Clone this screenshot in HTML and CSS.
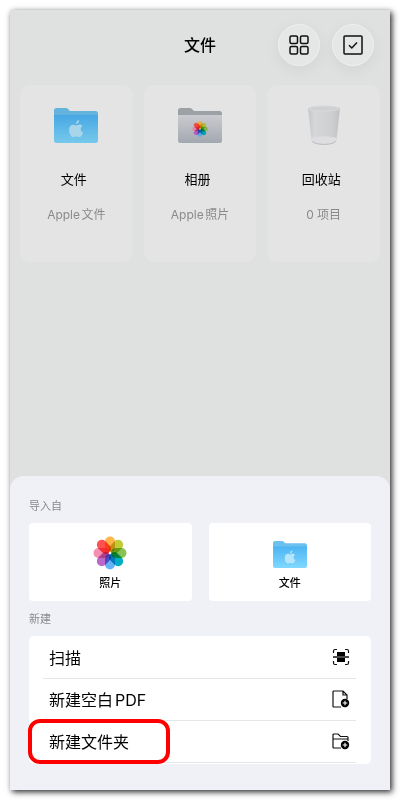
FILE: index.html
```html
<!DOCTYPE html>
<html lang="zh-CN">
  <head>
    <meta charset="UTF-8" />
    <meta name="viewport" content="width=device-width, initial-scale=1.0" />
    <title>文件</title>
    <link rel="stylesheet" href="styles.css">
  </head>
  <body>
    <!-- shared icon shapes -->
    <svg class="sprite" aria-hidden="true">
      <defs>
        <linearGradient id="blueFolder" x1="0" y1="0" x2="0" y2="1">
          <stop offset="0" stop-color="#4cb4f4" />
          <stop offset="1" stop-color="#80d8fd" />
        </linearGradient>
        <linearGradient id="grayFolder" x1="0" y1="0" x2="0" y2="1">
          <stop offset="0" stop-color="#d9dade" />
          <stop offset="1" stop-color="#afb5bd" />
        </linearGradient>
        <linearGradient id="binSide" x1="0" y1="0" x2="1" y2="0">
          <stop offset="0" stop-color="#c4c5c7" />
          <stop offset="0.2" stop-color="#d6d7d8" />
          <stop offset="0.75" stop-color="#cdced0" />
          <stop offset="1" stop-color="#c0c1c4" />
        </linearGradient>
      </defs>
      <symbol id="apple" viewBox="0 0 14 17">
        <path d="M9.8 0C10 2 8.500 4 6.700 4C6.500 2.200 8 .4 9.800 0ZM7 5.300C7.900 5.300 8.800 4.400 10.300 4.400C11.500 4.400 12.500 5 13.100 5.900C10.500 7.500 10.900 11.200 13.600 12.300C13 14.100 11.700 16.600 10.100 16.700C9 16.700 8.600 16 7.200 16C5.800 16 5.400 16.700 4.300 16.700C2.200 16.800 0 12.800 0 9.600C0 6.300 2 4.500 4.200 4.500C5.500 4.500 6.300 5.300 7 5.300Z" />
      </symbol>
      <symbol id="folder" viewBox="0 0 44 35">
        <path d="M2.500 0H11.500C13 0 13.600 .5 14.500 1.500C15.300 2.500 16 3 17.500 3H41.500Q44 3 44 5.500V12H0V2.500Q0 0 2.500 0Z" fill="#6cc0ee" />
        <path d="M0 7H44V32.500Q44 35 41.500 35H2.500Q0 35 0 32.500Z" fill="url(#blueFolder)" />
        <use href="#apple" x="15" y="12" width="14.500" height="17.500" fill="#b5e5fc" />
      </symbol>
      <symbol id="flower" viewBox="-17 -17 34 34">
        <g class="petals">
          <rect x="-5" y="-16.500" width="10" height="15.500" rx="5" fill="#ffb547" />
          <rect x="-5" y="-16.500" width="10" height="15.500" rx="5" fill="#c0cb36" transform="rotate(45)" />
          <rect x="-5" y="-16.500" width="10" height="15.500" rx="5" fill="#88c252" transform="rotate(90)" />
          <rect x="-5" y="-16.500" width="10" height="15.500" rx="5" fill="#00adc2" transform="rotate(135)" />
          <rect x="-5" y="-16.500" width="10" height="15.500" rx="5" fill="#62b4f7" transform="rotate(180)" />
          <rect x="-5" y="-16.500" width="10" height="15.500" rx="5" fill="#b968c9" transform="rotate(225)" />
          <rect x="-5" y="-16.500" width="10" height="15.500" rx="5" fill="#f490b2" transform="rotate(270)" />
          <rect x="-5" y="-16.500" width="10" height="15.500" rx="5" fill="#ff5150" transform="rotate(315)" />
        </g>
        <circle r="1.200" fill="#fff" />
      </symbol>
      <symbol id="plus" viewBox="0 0 10 10">
        <circle cx="5" cy="5" r="4.200" fill="#000" stroke="none" />
        <path d="M5 2.700V7.300M2.700 5H7.300" stroke="#fff" stroke-width="1.100" />
      </symbol>
    </svg>

    <div class="phone">
      <header class="top-bar">
        <h1>文件</h1>
        <div class="actions">
          <button type="button" class="round-btn" aria-label="网格视图">
            <svg width="20" height="20" viewBox="0 0 20 20" fill="none" stroke="#111" stroke-width="1.500">
              <rect x="1" y="1" width="7.500" height="7.500" rx="1.500" />
              <rect x="11.500" y="1" width="7.500" height="7.500" rx="1.500" />
              <rect x="1" y="11.500" width="7.500" height="7.500" rx="1.500" />
              <rect x="11.500" y="11.500" width="7.500" height="7.500" rx="1.500" />
            </svg>
          </button>
          <button type="button" class="round-btn" aria-label="选择">
            <svg width="20" height="20" viewBox="0 0 20 20" fill="none" stroke="#111" stroke-width="1.500">
              <rect x="1" y="1" width="18" height="18" rx="1" />
              <path d="M6 10.200L8.800 13L14 7.500" />
            </svg>
          </button>
        </div>
      </header>

      <main class="cards">
        <a href="#" class="card">
          <svg class="card-icon dim" viewBox="0 0 44 40"><use href="#folder" y="3" width="44" height="35" /></svg>
          <span class="card-title">文件</span>
          <span class="card-sub">Apple文件</span>
        </a>
        <a href="#" class="card">
          <svg class="card-icon dim" viewBox="0 0 44 40">
            <path d="M2.500 3H11.500C13 3 13.600 3.500 14.500 4.500C15.300 5.500 16 6 17.500 6H41.500Q44 6 44 8.500V14H0V5.500Q0 3 2.500 3Z" fill="#a8adb3" />
            <path d="M0 10H44V35.500Q44 38 41.500 38H2.500Q0 38 0 35.500Z" fill="url(#grayFolder)" />
            <use href="#flower" x="14" y="16" width="16" height="16" />
          </svg>
          <span class="card-title">相册</span>
          <span class="card-sub">Apple照片</span>
        </a>
        <a href="#" class="card">
          <svg class="card-icon" viewBox="0 0 44 40">
            <path d="M6 3L9.500 35C10.500 41 33.500 41 34.500 35L38 3Z" fill="url(#binSide)" />
            <path d="M9.300 33C15 31 29 31 34.700 33L34.500 35C33.500 41 10.500 41 9.500 35Z" fill="#dedee0" />
            <path d="M10 36C12 40.500 32 40.500 34 36" fill="none" stroke="#b8babd" />
            <ellipse cx="22" cy="3.500" rx="15.500" ry="2.500" fill="#cfd0d2" stroke="#d9dadb" />
          </svg>
          <span class="card-title">回收站</span>
          <span class="card-sub">0 项目</span>
        </a>
      </main>

      <section class="sheet">
        <h2>导入自</h2>
        <div class="tiles">
          <button type="button" class="tile">
            <svg width="34" height="34"><use href="#flower" width="34" height="34" /></svg>
            <span>照片</span>
          </button>
          <button type="button" class="tile">
            <svg width="34" height="34"><use href="#folder" y="5" width="34" height="27" /></svg>
            <span>文件</span>
          </button>
        </div>

        <h2>新建</h2>
        <div class="list">
          <button type="button" class="row">
            <span>扫描</span>
            <svg width="18" height="18" viewBox="0 0 18 18" fill="none" stroke="#111">
              <path d="M1.500 5V3Q1.500 1.500 3 1.500H5M13 1.500H15Q16.500 1.500 16.500 3V5M16.500 13V15Q16.500 16.500 15 16.500H13M5 16.500H3Q1.500 16.500 1.500 15V13" stroke-width="1.200" />
              <path d="M5 4H13V8H5ZM5 10H13V14H5Z" fill="#000" stroke="none" />
              <path d="M1 9H17" stroke-width="1.500" />
            </svg>
          </button>
          <button type="button" class="row">
            <span>新建空白PDF</span>
            <svg width="18" height="18" viewBox="0 0 18 18" fill="none" stroke="#111">
              <path d="M9 17H2Q1 17 1 16V2Q1 1 2 1H11L15 5V9M11 1V5H15" stroke-width="1.200" />
              <use href="#plus" x="8" y="8" width="10" height="10" />
            </svg>
          </button>
          <button type="button" class="row marked">
            <span>新建文件夹</span>
            <svg width="18" height="18" viewBox="0 0 18 18" fill="none" stroke="#111">
              <path d="M9 16H2Q1 16 1 15V3Q1 2 2 2H6L8.500 4.500H15Q16 4.500 16 5.500V9M1 7H16" stroke-width="1.200" />
              <use href="#plus" x="8" y="8" width="10" height="10" />
            </svg>
          </button>
        </div>
      </section>
    </div>
  </body>
</html>
```

FILE: styles.css
```css
*,
*::after {
  margin: 0;
  padding: 0;
  box-sizing: border-box;
}

body {
  display: flex;
  min-height: 100vh;
  padding: 10px 11px 11px 10px;
  background-color: #fff;
  color: #000;
  font-family: Inter, "Noto Sans CJK SC", sans-serif;
  text-autospace: normal;
}

button {
  border: none;
  color: inherit;
  font-family: inherit;
  cursor: pointer;
}

.sprite {
  position: absolute;
  width: 0;
  height: 0;
}

.petals {
  isolation: isolate;
}

.petals rect {
  mix-blend-mode: multiply;
}

.phone {
  flex: 1;
  display: flex;
  flex-direction: column;
  background-color: #dfe1e0;
  box-shadow: 2px 2px 6px rgba(0, 0, 0, 0.85);
}

.top-bar {
  display: grid;
  grid-template-columns: 1fr auto 1fr;
  align-items: center;
  height: 69px;
  padding: 0 16px;
}

.top-bar h1 {
  grid-column: 2;
  font-size: 16px;
  font-weight: 500;
  line-height: 24px;
}

.actions {
  display: flex;
  justify-content: flex-end;
  gap: 12px;
}

.round-btn {
  display: flex;
  justify-content: center;
  align-items: center;
  width: 42px;
  height: 42px;
  border: 1px solid #eff0f0;
  border-radius: 50%;
  background-color: #e5e6e6;
  box-shadow: 0 4px 16px rgba(0, 0, 0, 0.06);
}

.cards {
  display: grid;
  grid-template-columns: repeat(3, 1fr);
  gap: 11px;
  margin: 6px 10px 24px;
}

.card {
  display: flex;
  flex-direction: column;
  align-items: center;
  height: 177px;
  padding-top: 20px;
  border-radius: 10px;
  background-color: #e4e4e4;
  color: #000;
  text-decoration: none;
}

.card-icon {
  width: 44px;
  height: 40px;
}

.dim {
  filter: brightness(0.93);
}

.card-title {
  margin-top: 24px;
  padding-right: 5px;
  font-size: 13px;
  line-height: 20px;
}

.card-sub {
  margin-top: 16px;
  color: #8a8a8c;
  font-size: 12px;
  line-height: 20px;
}

.sheet {
  margin-top: auto;
  padding: 21px 19px 26px;
  border-radius: 14px 14px 0 0;
  background-color: #f0f1f6;
}

.sheet h2 {
  color: #8a8a8e;
  font-size: 11px;
  font-weight: 400;
  line-height: 18px;
}

.tiles {
  display: grid;
  grid-template-columns: 1fr 1fr;
  gap: 17px;
  margin: 8px 0 9px;
}

.tile {
  display: flex;
  flex-direction: column;
  align-items: center;
  height: 78px;
  padding-top: 13px;
  border-radius: 4px;
  background-color: #fff;
  font-size: 11px;
  font-weight: 500;
  line-height: 16px;
}

.tile span {
  margin-top: 5px;
}

.list {
  margin-top: 8px;
  padding: 1px 15px 1px 14px;
  border-radius: 5px;
  background-color: #fff;
}

.row {
  position: relative;
  display: flex;
  justify-content: space-between;
  align-items: center;
  width: 100%;
  height: 42px;
  padding: 0 6px 1px;
  border-bottom: 1px solid #e4e6e8;
  background-color: transparent;
  font-size: 16px;
}

/* red frame drawn around the highlighted item */
.marked::after {
  content: "";
  position: absolute;
  top: -2px;
  left: -15px;
  width: 142px;
  height: 45px;
  border: 4px solid #f00;
  border-radius: 12px;
}
```
